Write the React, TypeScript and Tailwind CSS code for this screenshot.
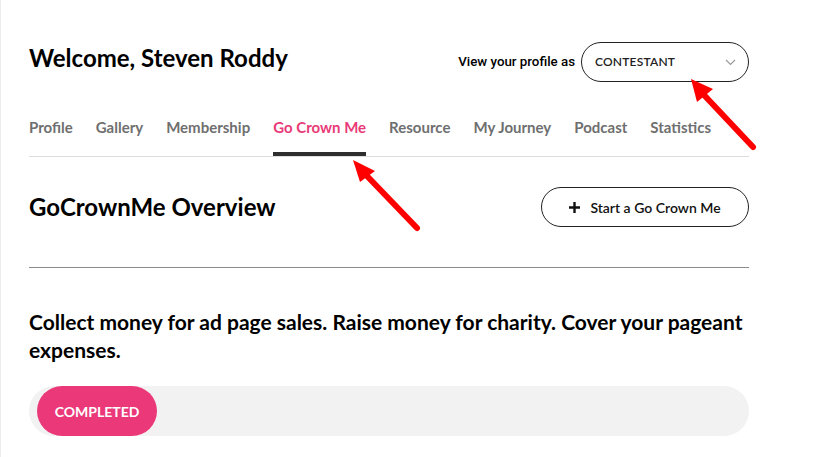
const tabs = [
  "Profile",
  "Gallery",
  "Membership",
  "Go Crown Me",
  "Resource",
  "My Journey",
  "Podcast",
  "Statistics",
];

export default function App() {
  return (
    <div className="relative min-h-[457px] w-[814px] overflow-hidden bg-white border-l border-[#ececec] font-['Lato',sans-serif] text-[#111]">
      <div className="w-[720px] ml-[28px] pt-[42px]">
        {/* Header */}
        <div className="flex items-start justify-between">
          <h1 className="text-[24px] leading-8 font-bold text-black">Welcome, Steven Roddy</h1>
          <div className="flex items-center gap-[6px]">
            <span className="font-['Roboto',sans-serif] font-medium text-[13.3px] text-black">
              View your profile as
            </span>
            <button className="flex h-[40px] w-[168px] items-center justify-between rounded-full border border-[#222] pl-[13px] pr-[12px]">
              <span className="text-[12px] font-semibold tracking-[0.2px] text-[#222]">CONTESTANT</span>
              <svg width="11" height="7" viewBox="0 0 11 7" fill="none">
                <path d="M1 1l4.5 4.5L10 1" stroke="#9a9a9a" strokeWidth="1.2" />
              </svg>
            </button>
          </div>
        </div>

        {/* Tabs */}
        <ul className="mt-[35px] flex gap-[23px] border-b border-[#dcdcdc]">
          {tabs.map((t) => (
            <li
              key={t}
              className={
                t === "Go Crown Me"
                  ? "pb-[15px] border-b-4 border-[#2e2e2e] text-[15px] leading-5 font-bold text-[#e93a78]"
                  : "pb-[15px] border-b-4 border-transparent text-[15px] leading-5 font-bold text-[#6f6f6f]"
              }
            >
              {t}
            </li>
          ))}
        </ul>

        {/* Overview */}
        <div className="mt-[30px] flex items-center justify-between">
          <h2 className="text-[24px] leading-8 font-bold text-black">GoCrownMe Overview</h2>
          <button className="flex h-[40px] w-[208px] items-center justify-center gap-[10px] rounded-full border border-[#222]">
            <svg width="11" height="11" viewBox="0 0 11 11">
              <path d="M5.5 0v11M0 5.5h11" stroke="#111" strokeWidth="2.4" />
            </svg>
            <span className="text-[14px] font-semibold text-[#111]">Start a Go Crown Me</span>
          </button>
        </div>

        <hr className="mt-[40px] border-0 border-t border-[#8a8a8a]" />

        <p className="mt-[40px] text-[21px] leading-7 font-bold text-black">
          Collect money for ad page sales. Raise money for charity. Cover your pageant expenses.
        </p>

        {/* Progress */}
        <div className="mt-[22px] flex h-[50px] rounded-full bg-[#f2f2f2] pl-[8px]">
          <div className="flex h-full w-[120px] items-center justify-center rounded-full bg-[#ea3879]">
            <span className="text-[14px] font-bold text-white">COMPLETED</span>
          </div>
        </div>
      </div>

      {/* Annotation arrows */}
      <svg className="pointer-events-none absolute left-0 top-0" width="814" height="457">
        <line x1="416" y1="228" x2="366" y2="176" stroke="#ff0000" strokeWidth="6" strokeLinecap="round" />
        <polygon points="352,160 359,182 374,171" fill="#ff0000" />
        <line x1="752" y1="147" x2="703" y2="95" stroke="#ff0000" strokeWidth="6" strokeLinecap="round" />
        <polygon points="690,79 696,102 712,89" fill="#ff0000" />
      </svg>
    </div>
  );
}
